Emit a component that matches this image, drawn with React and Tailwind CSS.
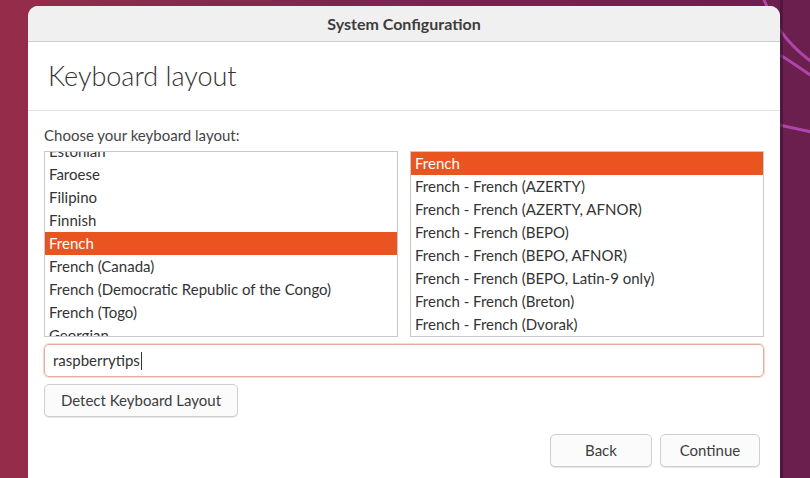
export default function App() {
  const left = [
    'Estonian',
    'Faroese',
    'Filipino',
    'Finnish',
    'French',
    'French (Canada)',
    'French (Democratic Republic of the Congo)',
    'French (Togo)',
    'Georgian',
  ];
  const right = [
    'French',
    'French - French (AZERTY)',
    'French - French (AZERTY, AFNOR)',
    'French - French (BEPO)',
    'French - French (BEPO, AFNOR)',
    'French - French (BEPO, Latin-9 only)',
    'French - French (Breton)',
    'French - French (Dvorak)',
  ];

  const row = (t) =>
    t === 'French'
      ? 'flex h-[23px] items-center bg-[#e95420] px-[4px] text-[15px] text-white'
      : 'flex h-[23px] items-center px-[4px] text-[15px] text-[#333]';

  const btn =
    'flex h-[33px] items-center justify-center rounded-[5px] border border-[#cfcfcf] bg-[#fbfbfb] text-[15px] text-[#3d3d3d] shadow-[0_1px_0_#e6e6e6]';

  return (
    <div
      className="relative h-[478px] w-[810px] overflow-hidden bg-gradient-to-r from-[#952d4a] via-[#7a2450] to-[#6a1f4e] text-[#3d3d3d]"
      style={{ fontFamily: 'Lato, "Noto Sans", sans-serif' }}
    >
      {/* wallpaper swirls */}
      <svg className="absolute inset-0" width="810" height="478" viewBox="0 0 810 478">
        <path d="M762 -5 C 772 20 784 42 812 62" stroke="#c24fbf" strokeWidth="3" fill="none" opacity="0.8" />
        <path d="M780 55 C 792 62 802 70 812 76" stroke="#c24fbf" strokeWidth="3" fill="none" opacity="0.8" />
        <path d="M780 125 C 792 128 802 130 812 132" stroke="#c24fbf" strokeWidth="3" fill="none" opacity="0.8" />
        <rect x="780" y="0" width="3" height="478" fill="#3e1230" opacity="0.6" />
      </svg>

      <div className="relative ml-[28px] mt-[6px] h-[480px] w-[752px] overflow-hidden rounded-t-[10px] bg-white">
        <div className="flex h-[36px] items-center justify-center border-b border-[#cdcdcd] bg-[#f0f0f0] text-[16px] font-bold text-[#3d3d3d]">
          System Configuration
        </div>

        <div className="flex h-[69px] items-center border-b border-[#e3e3e3] pl-[20px] text-[27px] font-light text-[#333]">
          Keyboard layout
        </div>

        <div className="px-[16px]">
          <div className="mt-[16px] text-[15px] leading-[17px] text-[#444]">Choose your keyboard layout:</div>

          <div className="mt-[7px] flex gap-[12px]">
            <div className="h-[186px] w-[354px] overflow-hidden border border-[#c9c9c9] bg-white">
              <div className="-mt-[12px]">
                {left.map((t) => (
                  <div key={t} className={row(t)}>
                    {t}
                  </div>
                ))}
              </div>
            </div>

            <div className="h-[186px] w-[354px] overflow-hidden border border-[#c9c9c9] bg-white">
              {right.map((t) => (
                <div key={t} className={row(t)}>
                  {t}
                </div>
              ))}
            </div>
          </div>

          <div className="mt-[7px] flex h-[33px] items-center rounded-[5px] border border-[#e5ad9a] pl-[8px] text-[15px] text-[#333] shadow-[0_0_0_1px_#f6ddd3]">
            raspberrytips
            <span className="ml-[1px] inline-block h-[18px] w-[1px] bg-[#333]" />
          </div>

          <div className={`mt-[7px] w-[194px] ${btn}`}>Detect Keyboard Layout</div>

          <div className="mr-[4px] mt-[17px] flex justify-end gap-[8px]">
            <div className={`w-[102px] ${btn}`}>Back</div>
            <div className={`w-[100px] ${btn}`}>Continue</div>
          </div>
        </div>
      </div>
    </div>
  );
}
